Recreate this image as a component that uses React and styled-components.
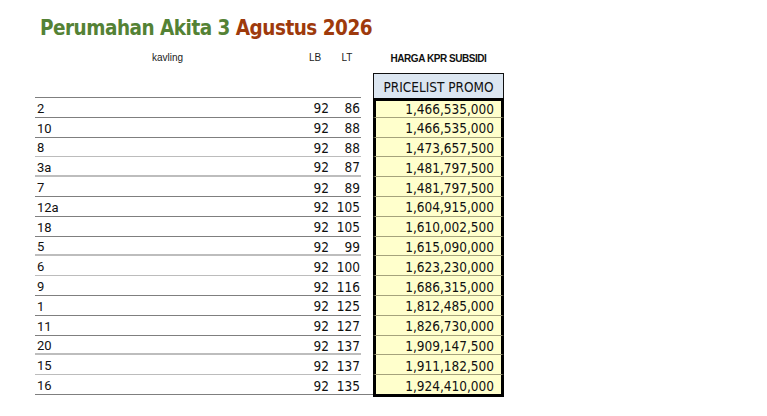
import React from "react";
import styled, { createGlobalStyle } from "styled-components";

const rows = [
    { kav: "2", lb: 92, lt: 86, price: "1,466,535,000", line: "dark" },
    { kav: "10", lb: 92, lt: 88, price: "1,466,535,000", line: "dark" },
    { kav: "8", lb: 92, lt: 88, price: "1,473,657,500", line: "thin" },
    { kav: "3a", lb: 92, lt: 87, price: "1,481,797,500", line: "thick" },
    { kav: "7", lb: 92, lt: 89, price: "1,481,797,500", line: "dark" },
    { kav: "12a", lb: 92, lt: 105, price: "1,604,915,000", line: "dark" },
    { kav: "18", lb: 92, lt: 105, price: "1,610,002,500", line: "dark" },
    { kav: "5", lb: 92, lt: 99, price: "1,615,090,000", line: "thick" },
    { kav: "6", lb: 92, lt: 100, price: "1,623,230,000", line: "thin" },
    { kav: "9", lb: 92, lt: 116, price: "1,686,315,000", line: "dark" },
    { kav: "1", lb: 92, lt: 125, price: "1,812,485,000", line: "dark" },
    { kav: "11", lb: 92, lt: 127, price: "1,826,730,000", line: "dark" },
    { kav: "20", lb: 92, lt: 137, price: "1,909,147,500", line: "thick" },
    { kav: "15", lb: 92, lt: 137, price: "1,911,182,500", line: "thin" },
    { kav: "16", lb: 92, lt: 135, price: "1,924,410,000", line: "dark" },
];

const lineStyles = {
    dark: "1px solid #7f7f7f",
    thin: "1px solid #bcbcbc",
    thick: "2px solid #bdbdbd",
};

const App = () => {
    return (
        <>
            <GlobalStyle />
            <Page>
                <Title>
                    <Green>Perumahan Akita 3</Green> <Brown>Agustus 2026</Brown>
                </Title>

                <HeaderRow>
                    <LeftCells>
                        <Label>kavling</Label>
                        <Label>LB</Label>
                        <Label $shift>LT</Label>
                    </LeftCells>
                    <Gap />
                    <Harga>HARGA KPR SUBSIDI</Harga>
                </HeaderRow>

                <PromoRow>
                    <LeftCells $line={lineStyles.dark} />
                    <Gap />
                    <PromoHead>PRICELIST PROMO</PromoHead>
                </PromoRow>

                {rows.map((r, i) => (
                    <Row key={r.kav}>
                        <LeftCells $line={lineStyles[r.line]}>
                            <Kavling>{r.kav}</Kavling>
                            <Num>{r.lb}</Num>
                            <Num>{r.lt}</Num>
                        </LeftCells>
                        <Gap $line={i === rows.length - 1} />
                        <Price $first={i === 0} $last={i === rows.length - 1}>
                            {r.price}
                        </Price>
                    </Row>
                ))}
            </Page>
        </>
    );
};

const GlobalStyle = createGlobalStyle`
    body {
        margin: 0;
        background: #ffffff;
        font-family: "Liberation Sans", Arial, sans-serif;
    }
`;

const Page = styled.div`
    display: flex;
    flex-direction: column;
    padding-left: 35px;
    width: 767px;
    height: 416px;
    box-sizing: border-box;
    overflow: hidden;
`;

const Title = styled.h1`
    margin: 0 0 0 5px;
    padding-top: 15px;
    height: 26px;
    line-height: 26px;
    font-family: "DejaVu Sans Condensed", "DejaVu Sans", sans-serif;
    font-size: 20.5px;
    letter-spacing: -0.5px;
    font-weight: bold;
    white-space: nowrap;
`;

const Green = styled.span`
    color: #548235;
`;

const Brown = styled.span`
    color: #9e3a0c;
`;

const HeaderRow = styled.div`
    display: flex;
    align-items: center;
    height: 32px;
`;

const PromoRow = styled.div`
    display: flex;
    height: 25px;
`;

const Row = styled.div`
    display: flex;
    height: 19.8px;
    align-items: flex-start;
`;

const LeftCells = styled.div`
    display: grid;
    grid-template-columns: 265px 30px 31px;
    align-items: center;
    width: 326px;
    height: 100%;
    box-sizing: border-box;
    border-bottom: ${(p) => p.$line || "none"};
`;

const Gap = styled.div`
    width: 12px;
    height: 100%;
    box-sizing: border-box;
    padding: 0 2px;
    background-clip: content-box;
    border-bottom: ${(p) => (p.$line ? "1px solid #7f7f7f" : "none")};
`;

const Label = styled.span`
    text-align: center;
    font-size: 10px;
    color: #222;
    padding-left: ${(p) => (p.$shift ? "3px" : "0")};
`;

const Harga = styled.span`
    width: 131px;
    text-align: center;
    font-size: 10px;
    font-weight: bold;
    letter-spacing: -0.45px;
    color: #111;
    padding-top: 2px;
`;

const PromoHead = styled.div`
    display: flex;
    align-items: center;
    justify-content: center;
    width: 131px;
    height: 25px;
    box-sizing: border-box;
    padding-top: 1px;
    border: 1.5px solid #111;
    border-bottom: none;
    background: #dce6f1;
    font-family: "DejaVu Sans Condensed", "DejaVu Sans", sans-serif;
    font-size: 13.5px;
    color: #111;
`;

const Kavling = styled.span`
    padding: 2px 0 0 2px;
    font-family: Roboto, "Liberation Sans", sans-serif;
    font-size: 13px;
    color: #111;
`;

const Num = styled.span`
    text-align: right;
    padding: 2px 1px 0 0;
    font-family: "DejaVu Sans Condensed", "DejaVu Sans", sans-serif;
    font-size: 13.5px;
    color: #111;
`;

const Price = styled.div`
    display: flex;
    align-items: center;
    justify-content: flex-end;
    width: 131px;
    height: ${(p) => (p.$last ? "22px" : "19.8px")};
    box-sizing: border-box;
    padding: ${(p) => (p.$first ? "0" : "2px")} 7px 0 0;
    background: #ffffcc;
    border-left: 3px solid #000;
    border-right: 3px solid #000;
    border-top: ${(p) => (p.$first ? "3px solid #000" : "none")};
    border-bottom: ${(p) => (p.$last ? "3px solid #000" : "1px solid #a6a37c")};
    font-family: "DejaVu Sans Condensed", "DejaVu Sans", sans-serif;
    font-size: 13.5px;
    color: #111;
`;

export default App;
